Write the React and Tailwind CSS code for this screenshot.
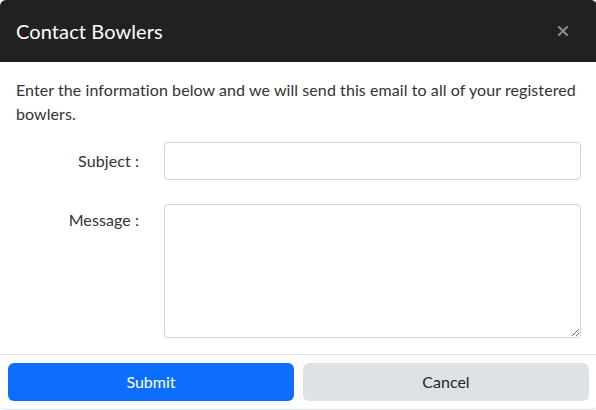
import React from "react"

const App = () => {
  return (
    <div className="w-[596px] h-[410px] bg-white overflow-hidden font-['Lato',sans-serif] text-[#212529]">
      <div className="w-[597px] flex flex-col rounded-md border-b border-[#dee2e6] overflow-hidden">
        {/* Header */}
        <div className="h-[62px] bg-[#212121] flex items-center justify-between pl-4 pr-[29px]">
          <h1 className="text-[20px] text-white leading-none tracking-[0.1px]">Contact Bowlers</h1>
          <svg width="10" height="10" viewBox="0 0 10 10" className="text-[#8c8c8c]">
            <path d="M1 1L9 9M9 1L1 9" stroke="currentColor" strokeWidth="2" strokeLinecap="square" />
          </svg>
        </div>

        {/* Body */}
        <div className="px-4 pt-4 tracking-[0.08px]">
          <p className="text-[16px] leading-6 text-[#333]">
            Enter the information below and we will send this email to all of your registered bowlers.
          </p>
          <div className="mt-4 flex items-center">
            <label className="w-[123px] text-right text-[#333]">Subject :</label>
            <input className="ml-[25px] flex-1 h-[38px] rounded border border-[#ced4da]" />
          </div>
          <div className="mt-6 flex items-start">
            <label className="w-[123px] text-right text-[#333] pt-1">Message :</label>
            <textarea className="ml-[25px] flex-1 h-[134px] rounded border border-[#ced4da]" />
          </div>
        </div>

        {/* Footer */}
        <div className="mt-4 border-t border-[#dee2e6] p-2 flex gap-[9px]">
          <button className="flex-1 h-[38px] rounded-md bg-[#0d6efd] text-white">Submit</button>
          <button className="flex-1 h-[38px] rounded-md bg-[#dee2e6] text-[#212529]">Cancel</button>
        </div>
      </div>
    </div>
  )
}

export default App
